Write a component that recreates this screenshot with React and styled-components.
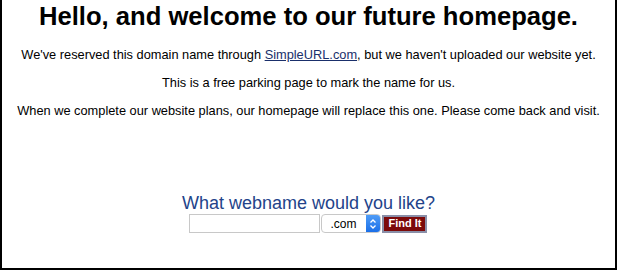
import React from "react";
import styled, { createGlobalStyle } from "styled-components";

const Global = createGlobalStyle`
  html, body { margin: 0; padding: 0; background: #fff; }
  body { font-family: "Liberation Sans", Arial, sans-serif; }
`;

const Frame = styled.div`
  box-sizing: border-box;
  width: 617px;
  height: 270px;
  border: 2px solid #000;
  border-top: none;
  display: flex;
  flex-direction: column;
  align-items: center;
  text-align: center;
  color: #000;
`;

const Heading = styled.h1`
  margin: 2px 0 0;
  font-size: 25.6px;
  font-weight: bold;
  line-height: 28px;
`;

const Para = styled.p`
  margin: ${(p) => p.$top}px 0 0;
  font-size: 12.8px;
  line-height: 16px;
`;

const Link = styled.a`
  color: #1a2f6b;
  text-decoration: underline;
`;

const Search = styled.form`
  margin: 74px 0 0;
  display: flex;
  flex-direction: column;
  align-items: center;
`;

const Question = styled.div`
  color: #23438a;
  font-size: 18px;
  line-height: 20px;
`;

const Row = styled.div`
  display: flex;
  align-items: center;
  gap: 1px;
  margin-top: 1px;
`;

const TextBox = styled.input`
  box-sizing: border-box;
  width: 131px;
  height: 19px;
  border: 1px solid #c8c8c8;
  margin: 0;
  padding: 0 2px;
`;

const SelectWrap = styled.div`
  position: relative;
  box-sizing: border-box;
  width: 60px;
  height: 19px;
  border: 1px solid #c8c8c8;
  border-radius: 4px;
  background: #fff;
  display: flex;
  align-items: center;
  font-size: 12px;
  padding-left: 8px;
  overflow: hidden;
`;

const Stepper = styled.span`
  position: absolute;
  right: 0;
  top: 0;
  bottom: 0;
  width: 14px;
  background: linear-gradient(#4f9cf7, #1a6fe8);
  display: flex;
  align-items: center;
  justify-content: center;
`;

const Button = styled.button`
  box-sizing: border-box;
  height: 18px;
  margin: 0;
  padding: 0 4px;
  background: #7c0a0a;
  color: #fff;
  font-family: "Liberation Sans", Arial, sans-serif;
  font-weight: bold;
  font-size: 11px;
  border: 2px solid #8a8fa8;
  line-height: 1;
`;

export default function App() {
  return (
    <>
      <Global />
      <Frame>
        <Heading>Hello, and welcome to our future homepage.</Heading>
        <Para $top={17}>
          We've reserved this domain name through <Link href="#">SimpleURL.com</Link>, but we haven't uploaded our website yet.
        </Para>
        <Para $top={12}>This is a free parking page to mark the name for us.</Para>
        <Para $top={12}>When we complete our website plans, our homepage will replace this one. Please come back and visit.</Para>
        <Search onSubmit={(e) => e.preventDefault()}>
          <Question>What webname would you like?</Question>
          <Row>
            <TextBox type="text" />
            <SelectWrap>
              .com
              <Stepper>
                <svg width="8" height="12" viewBox="0 0 8 12">
                  <path d="M1.5 4.5 L4 2 L6.5 4.5 M1.5 7.5 L4 10 L6.5 7.5" fill="none" stroke="#fff" strokeWidth="1.3" />
                </svg>
              </Stepper>
            </SelectWrap>
            <Button type="submit">Find It</Button>
          </Row>
        </Search>
      </Frame>
    </>
  );
}
